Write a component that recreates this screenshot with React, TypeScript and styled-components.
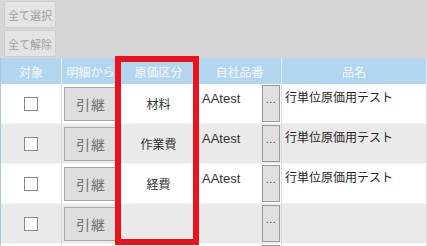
import React from "react";
import { createGlobalStyle, styled } from "styled-components";

const GlobalStyle = createGlobalStyle`
  html, body {
    margin: 0;
    padding: 0;
    background: #d6d6d6;
    font-family: "Noto Sans CJK JP", "Noto Sans", sans-serif;
  }
`;

const Page = styled.div`
  position: relative;
  width: 427px;
  height: 246px;
  overflow: hidden;
  background: #d6d6d6;
`;

const Toolbar = styled.div`
  display: flex;
  flex-direction: column;
  gap: 2px;
  padding: 1px 0 1px 4px;
  height: 56px;
`;

const ToolButton = styled.button`
  width: 52px;
  height: 27px;
  padding: 0;
  border: 1px solid #cfcfcf;
  background: #e4e4e4;
  color: #a0a0a0;
  font-family: inherit;
  font-size: 11px;
`;

const Grid = styled.div`
  display: grid;
  grid-template-columns: 61px 58px 78px 84px 1fr;
  border-left: 1px solid #a9c8e0;
`;

const HeadCell = styled.div`
  height: 26px;
  display: flex;
  align-items: center;
  justify-content: center;
  background: #b2d6ef;
  color: #f4f9fd;
  font-size: 12px;
  border-right: 1px solid #d9ecf8;
  box-sizing: border-box;
`;

const Cell = styled.div<{ $alt: boolean; $justify?: string }>`
  height: 40px;
  box-sizing: border-box;
  background: ${(p) => (p.$alt ? "#eaeaea" : "#ffffff")};
  border-right: 1px solid #dcdcdc;
  border-bottom: 1px solid #f4f4f4;
  display: flex;
  align-items: center;
  justify-content: ${(p) => p.$justify ?? "center"};
  font-size: 12px;
  color: #333;
`;

const CodeCell = styled(Cell)`
  justify-content: space-between;
  align-items: stretch;
  padding: 0 1px 1px 4px;
`;

const CodeText = styled.span`
  font-family: "Liberation Sans", Arial, sans-serif;
  font-size: 13px;
  color: #333;
  padding-top: 7px;
`;

const NameCell = styled(Cell)`
  justify-content: flex-start;
  align-items: flex-start;
  padding: 4px 0 0 3px;
  color: #2a1d1d;
  font-size: 12px;
`;

const Check = styled.span`
  width: 12px;
  height: 12px;
  border: 1px solid #8a8a8a;
  background: #fff;
`;

const CarryButton = styled.button`
  width: 54px;
  height: 34px;
  padding: 0;
  margin-left: 2px;
  border: 1px solid #a8a8a8;
  background: #dedede;
  color: #707070;
  font-family: inherit;
  font-size: 14px;
  letter-spacing: 1px;
`;

const DotsButton = styled.button`
  width: 18px;
  height: 37px;
  padding: 0 0 8px 0;
  margin-top: 1px;
  border: 1px solid #9a9a9a;
  background: #e0e0e0;
  color: #444;
  font-size: 11px;
  line-height: 1;
  font-family: "Liberation Sans", Arial, sans-serif;
  display: flex;
  align-items: center;
  justify-content: center;
  letter-spacing: 0.5px;
`;

const Highlight = styled.div`
  position: absolute;
  left: 115px;
  top: 56px;
  width: 84px;
  height: 189px;
  box-sizing: border-box;
  border: 6px solid #e8131d;
  pointer-events: none;
`;

const rows = [
  { cost: "材料", code: "AAtest", name: "行単位原価用テスト", label: true },
  { cost: "作業費", code: "AAtest", name: "行単位原価用テスト", label: true },
  { cost: "経費", code: "AAtest", name: "行単位原価用テスト", label: true },
  { cost: "", code: "", name: "", label: true },
  { cost: "", code: "", name: "", label: false },
];

const headers = ["対象", "明細から", "原価区分", "自社品番", "品名"];

export default function App() {
  return (
    <Page>
      <GlobalStyle />
      <Toolbar>
        <ToolButton>全て選択</ToolButton>
        <ToolButton>全て解除</ToolButton>
      </Toolbar>
      <Grid>
        {headers.map((h) => (
          <HeadCell key={h}>{h}</HeadCell>
        ))}
        {rows.map((r, i) => {
          const alt = i % 2 === 1;
          return (
            <React.Fragment key={i}>
              <Cell $alt={alt}>
                <Check />
              </Cell>
              <Cell $alt={alt} $justify="flex-start">
                <CarryButton>{r.label ? "引継" : ""}</CarryButton>
              </Cell>
              <Cell $alt={alt}>{r.cost}</Cell>
              <CodeCell $alt={alt}>
                <CodeText>{r.code}</CodeText>
                <DotsButton>{r.label ? "..." : ""}</DotsButton>
              </CodeCell>
              <NameCell $alt={alt}>{r.name}</NameCell>
            </React.Fragment>
          );
        })}
      </Grid>
      <Highlight />
    </Page>
  );
}
